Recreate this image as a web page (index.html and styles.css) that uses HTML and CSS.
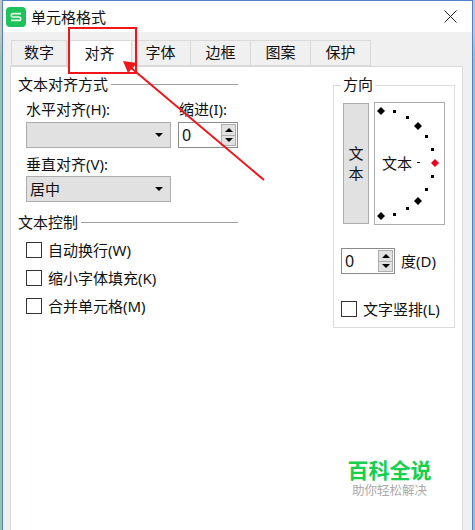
FILE: index.html
```html
<!DOCTYPE html>
<html lang="zh">
<head>
<meta charset="utf-8">
<title>单元格格式</title>
<link rel="stylesheet" href="styles.css">
</head>
<body>
<div class="window">
  <header class="titlebar">
    <svg class="logo" width="20" height="20" viewBox="0 0 20 20"><rect width="20" height="20" rx="4" fill="#1ec25a"/><path d="M15 6.6H7a1.7 1.7 0 0 0 0 3.4h6a1.7 1.7 0 0 1 0 3.4H5" fill="none" stroke="#e8fbe9" stroke-width="1.7"/></svg>
    <span class="title">单元格格式</span>
    <svg class="close" width="13" height="13" viewBox="0 0 13 13"><path d="M.5.5l12 12M12.5.5l-12 12" stroke="#222" stroke-width="1" fill="none"/></svg>
  </header>
  <div class="body">
    <nav class="tabs">
      <div class="tab t1">数字</div>
      <div class="tab active">对齐</div>
      <div class="tab">字体</div>
      <div class="tab">边框</div>
      <div class="tab">图案</div>
      <div class="tab">保护</div>
    </nav>
    <main class="panel">
      <div class="left">
        <div class="heading"><span>文本对齐方式</span><i></i></div>
        <div class="grid">
          <label class="lbl">水平对齐(H):</label>
          <label class="lbl ind">缩进(I):</label>
          <div class="select"><span></span><b class="caret"></b></div>
          <div class="spin w60"><span>0</span><div class="btns"><div class="btn"><b class="up"></b></div><div class="btn"><b class="down"></b></div></div></div>
        </div>
        <label class="lbl v">垂直对齐(V):</label>
        <div class="select s2"><span>居中</span><b class="caret"></b></div>
        <div class="heading h2"><span>文本控制</span><i></i></div>
        <div class="checks">
          <div class="check"><b class="box"></b><span>自动换行(W)</span></div>
          <div class="check"><b class="box"></b><span>缩小字体填充(K)</span></div>
          <div class="check"><b class="box"></b><span>合并单元格(M)</span></div>
        </div>
      </div>
      <fieldset class="dir">
        <legend>方向</legend>
        <div class="dial-row">
          <div class="vbtn"><span>文</span><span>本</span></div>
          <div class="dial">
            <svg class="dots" width="71" height="123" viewBox="0 0 71 123">
              <g fill="#000">
                <path d="M7 -4l4 4-4 4-4-4z" transform="translate(0,9)"/>
                <path d="M7 -4l4 4-4 4-4-4z" transform="translate(37,24)"/>
                <path d="M7 -4l4 4-4 4-4-4z" transform="translate(37,99)"/>
                <path d="M7 -4l4 4-4 4-4-4z" transform="translate(0,114)"/>
                <rect x="19" y="8" width="3" height="3"/><rect x="32" y="14" width="3" height="3"/>
                <rect x="51" y="33" width="3" height="3"/><rect x="57" y="46" width="3" height="3"/>
                <rect x="57" y="73" width="3" height="3"/><rect x="51" y="86" width="3" height="3"/>
                <rect x="32" y="105" width="3" height="3"/><rect x="19" y="111" width="3" height="3"/>
              </g>
              <path d="M61 57l4 4-4 4-4-4z" fill="#e8001c"/>
            </svg>
            <span class="dial-text">文本</span><i class="dash"></i>
          </div>
        </div>
        <div class="deg">
          <div class="spin w54"><span class="num">0</span><div class="btns"><div class="btn"><b class="up"></b></div><div class="btn"><b class="down"></b></div></div></div>
          <span>度(D)</span>
        </div>
        <div class="check vert"><b class="box"></b><span>文字竖排(L)</span></div>
      </fieldset>
    </main>
  </div>
</div>
<div class="mark">
  <svg width="475" height="530" viewBox="0 0 475 530">
    <rect x="69" y="28" width="67" height="45" fill="none" stroke="#f0161c" stroke-width="2"/>
    <path d="M264 180L130 67" stroke="#f0161c" stroke-width="2" fill="none"/>
    <path d="M123 61L137 63 128 73z" fill="#f0161c"/>
  </svg>
</div>
<div class="brand">
  <div class="brand-main">百科全说</div>
  <div class="brand-sub">助你轻松解决</div>
</div>
</body>
</html>
```

FILE: styles.css
```css
* { box-sizing: border-box; }
html, body { margin: 0; height: 100%; }
body {
  width: 475px;
  height: 530px;
  overflow: hidden;
  padding: 0 2px;
  position: relative;
  background: linear-gradient(#c6c4bb 0, #c6c4bb 32px, #98c2a4 60px, #98c2a4 100%);
  font-family: "Noto Sans", "Noto Sans CJK SC", sans-serif;
  font-size: 15px;
  line-height: 20px;
  color: #111;
}
.window {
  height: 530px;
  border: 1px solid #4f82cf;
  border-bottom: 0;
  display: flex;
  flex-direction: column;
  background: #f0f0f0;
}
.titlebar {
  height: 31px;
  flex: none;
  background: #fff;
  display: flex;
  align-items: center;
  padding: 0 15px 0 3px;
}
.logo { margin-top: 1px; }
.title { margin-left: 5px; }
.close { margin-left: auto; }
.body { flex: 1; display: flex; flex-direction: column; padding: 8px 9px 0 7px; min-height: 0; }
.tabs { display: flex; height: 27px; padding-left: 1px; flex: none; }
.tab {
  width: 60px;
  height: 26px;
  border: 1px solid #d9d9d9;
  border-left: 0;
  background: #f0f0f0;
  display: flex;
  align-items: center;
  justify-content: center;
  padding-bottom: 2px;
}
.t1 { width: 56px; border-left: 1px solid #d9d9d9; }
.active {
  width: 65px;
  height: 28px;
  background: #fff;
  border: 1px solid #d9d9d9;
  border-bottom: 0;
  margin-right: -1px;
  padding-bottom: 4px;
  position: relative;
  z-index: 1;
}
.panel {
  flex: 1;
  margin-top: -1px;
  background: #fff;
  border: 1px solid #d9d9d9;
  border-bottom: 0;
  display: flex;
  align-items: flex-start;
  padding: 8px 7px 0;
}
.left { width: 220px; flex: none; }
.heading { display: flex; align-items: flex-start; height: 20px; line-height: 18px; }
.heading i { flex: 1; height: 1px; background: #a0a0a0; margin: 9px 0 0 3px; }
.h2 { margin-top: 11px; }
.grid {
  display: grid;
  grid-template-columns: 145px 60px;
  column-gap: 7px;
  row-gap: 2px;
  margin: 5px 0 0 8px;
}
.lbl { display: block; height: 20px; line-height: 18px; white-space: nowrap; }
.ind { margin-left: 1px; }
.v { margin: 7px 0 1px 8px; }
.select {
  height: 26px;
  background: #e1e1e1;
  border: 1px solid #adadad;
  display: flex;
  align-items: center;
  justify-content: space-between;
  padding: 0 7px 0 3px;
}
.s2 { width: 145px; margin-left: 8px; }
.caret { width: 0; height: 0; border: 4px solid transparent; border-top: 4px solid #000; border-bottom: 0; }
.spin {
  height: 26px;
  border: 1px solid #8a8a8a;
  background: #fff;
  display: flex;
  align-items: center;
  justify-content: space-between;
  padding: 1px 1px 1px 3px;
  font-size: 16px;
}
.w60 { width: 60px; }
.w54 { width: 54px; flex: none; }
.btns { width: 15px; height: 22px; display: flex; flex-direction: column; }
.btn {
  flex: 1;
  background: #e1e1e1;
  border: 1px solid #adadad;
  display: flex;
  align-items: center;
  justify-content: center;
}
.btn + .btn { border-top: 0; }
.up { width: 0; height: 0; border: 4px solid transparent; border-top: 0; border-bottom: 4px solid #000; }
.down { width: 0; height: 0; border: 4px solid transparent; border-bottom: 0; border-top: 4px solid #000; }
.checks { margin: 9px 0 0 8px; display: flex; flex-direction: column; gap: 12px; }
.check { display: flex; align-items: center; height: 16px; gap: 6px; white-space: nowrap; }
.box { width: 16px; height: 16px; border: 1px solid #333; background: #fff; flex: none; }
.dir {
  width: 122px;
  height: 253px;
  margin: 0 0 0 95px;
  padding: 8px 7px 0;
  border: 1px solid #dcdcdc;
  min-width: 0;
  flex: none;
}
.dir legend { padding: 0 2px; height: 20px; line-height: 18px; }
.dial-row { display: flex; gap: 5px; margin-left: 2px; height: 122px; }
.vbtn {
  width: 26px;
  height: 121px;
  background: #e1e1e1;
  border: 1px solid #adadad;
  display: flex;
  flex-direction: column;
  align-items: center;
  justify-content: center;
  padding-bottom: 2px;
}
.dial {
  width: 71px;
  height: 123px;
  margin-top: -1px;
  border: 1px solid #adadad;
  position: relative;
  display: flex;
  align-items: center;
  padding: 0 0 2px 7px;
  flex: none;
}
.dots { position: absolute; left: -1px; top: -1px; }
.dial-text { position: relative; white-space: nowrap; }
.dash { width: 3px; height: 1px; background: #111; margin-left: 5px; flex: none; }
.deg { display: flex; align-items: center; gap: 6px; margin-top: 23px; white-space: nowrap; }
.vert { margin-top: 27px; }
.mark { position: absolute; left: 0; top: 0; pointer-events: none; z-index: 2; }
.mark svg { display: block; }
.brand {
  position: absolute;
  left: 340px;
  top: 459px;
  width: 99px;
  text-align: center;
  font-family: "Liberation Sans", "Noto Sans CJK SC", sans-serif;
}
.brand-main { font-size: 21px; line-height: 24px; font-weight: 700; color: #16cf4c; }
.brand-sub { font-size: 12.500px; line-height: 16px; color: #aaa; }
```
